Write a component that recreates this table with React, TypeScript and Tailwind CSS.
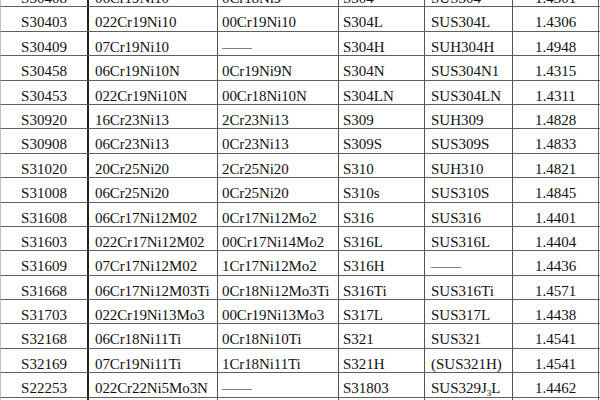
import type { ReactNode } from "react";

type Row = [string, string, ReactNode, string, ReactNode, string];

const DASH = "——";

const rows: Row[] = [
  ["S30408", "06Cr19Ni10", "0Cr18Ni9", "S304", "SUS304", "1.4301"],
  ["S30403", "022Cr19Ni10", "00Cr19Ni10", "S304L", "SUS304L", "1.4306"],
  ["S30409", "07Cr19Ni10", DASH, "S304H", "SUH304H", "1.4948"],
  ["S30458", "06Cr19Ni10N", "0Cr19Ni9N", "S304N", "SUS304N1", "1.4315"],
  ["S30453", "022Cr19Ni10N", "00Cr18Ni10N", "S304LN", "SUS304LN", "1.4311"],
  ["S30920", "16Cr23Ni13", "2Cr23Ni13", "S309", "SUH309", "1.4828"],
  ["S30908", "06Cr23Ni13", "0Cr23Ni13", "S309S", "SUS309S", "1.4833"],
  ["S31020", "20Cr25Ni20", "2Cr25Ni20", "S310", "SUH310", "1.4821"],
  ["S31008", "06Cr25Ni20", "0Cr25Ni20", "S310s", "SUS310S", "1.4845"],
  ["S31608", "06Cr17Ni12M02", "0Cr17Ni12Mo2", "S316", "SUS316", "1.4401"],
  ["S31603", "022Cr17Ni12M02", "00Cr17Ni14Mo2", "S316L", "SUS316L", "1.4404"],
  ["S31609", "07Cr17Ni12M02", "1Cr17Ni12Mo2", "S316H", DASH, "1.4436"],
  ["S31668", "06Cr17Ni12M03Ti", "0Cr18Ni12Mo3Ti", "S316Ti", "SUS316Ti", "1.4571"],
  ["S31703", "022Cr19Ni13Mo3", "00Cr19Ni13Mo3", "S317L", "SUS317L", "1.4438"],
  ["S32168", "06Cr18Ni11Ti", "0Cr18Ni10Ti", "S321", "SUS321", "1.4541"],
  ["S32169", "07Cr19Ni11Ti", "1Cr18Ni11Ti", "S321H", "(SUS321H)", "1.4541"],
  [
    "S22253",
    "022Cr22Ni5Mo3N",
    DASH,
    "S31803",
    <>
      SUS329J<sub className="text-[9px] leading-none">3</sub>L
    </>,
    "1.4462",
  ],
  ["", "", "", "", "", ""],
];

function GradeRow({ row }: { row: Row }) {
  const [cn, gb, old, astm, jis, din] = row;
  return (
    <div className="grid h-[24.4px] shrink-0 grid-cols-[88px_129px_121px_86px_88px_86px] border-b border-l border-b-[#5f5f5f] border-l-[#c4c4c4]">
      <div className="border-r-2 border-[#222] pt-[7px] text-center">{cn}</div>
      <div className="whitespace-nowrap border-r border-[#555] pl-[6px] pt-[7px] tracking-[-0.1px]">{gb}</div>
      <div className="whitespace-nowrap border-r border-[#555] pl-[4px] pt-[7px] tracking-[-0.1px]">{old}</div>
      <div className="whitespace-nowrap border-r border-[#555] pl-[4px] pt-[7px]">{astm}</div>
      <div className="whitespace-nowrap border-r border-[#555] pl-[6px] pt-[7px]">{jis}</div>
      <div className="border-r border-[#666] pt-[7px] text-center">{din}</div>
    </div>
  );
}

export default function App() {
  return (
    <div className="h-[400px] w-[600px] overflow-hidden bg-white font-['Liberation_Serif','Times_New_Roman',serif] text-[15px] leading-[16px] text-[#111]">
      <div className="-mt-[17px] flex flex-col">
        {rows.map((row, i) => (
          <GradeRow key={i} row={row} />
        ))}
      </div>
    </div>
  );
}
